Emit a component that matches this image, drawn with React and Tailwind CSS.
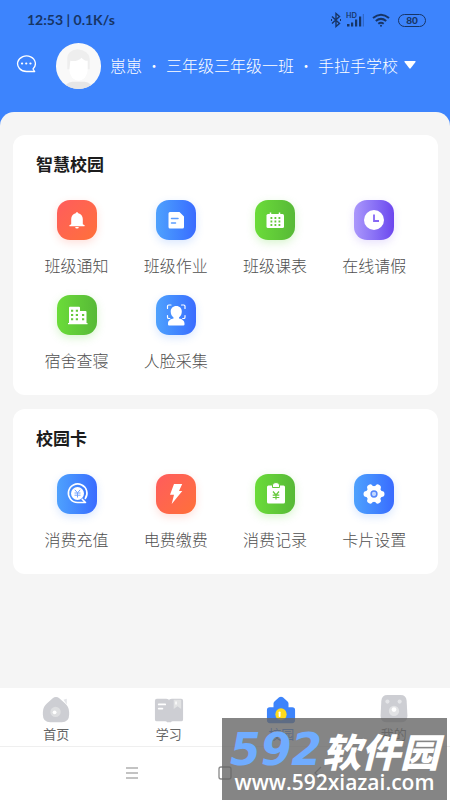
const GRADIENTS = {
  red: "bg-linear-to-br from-[#ff5c5c] to-[#ff7038] shadow-[0_3px_8px_#ff664d33]",
  blue: "bg-linear-to-r from-[#4fa1fd] to-[#3a6bff] shadow-[0_3px_8px_#4285ff33]",
  green: "bg-linear-to-r from-[#6bdc39] to-[#57b937] shadow-[0_3px_8px_#62d93b40]",
  purple: "bg-linear-to-r from-[#ab97fb] to-[#6d45ee] shadow-[0_3px_8px_#8b6bf533]",
};

const glyphs = {
  bell: (
    <g fill="#fff">
      <path d="M20 12.2c.7 0 1.200.5 1.300 1.100 2.700.6 4.500 2.800 4.500 5.600v5.300l1.700 1.100q.9.9-.4.9H12.900q-1.300 0-.4-.9l1.700-1.100v-5.300c0-2.800 1.800-5 4.500-5.600.1-.6.600-1.100 1.300-1.100z" />
      <path d="M18.200 27h3.600a1.800 1.600 0 0 1-3.600 0z" />
    </g>
  ),
  doc: (
    <>
      <path d="M14 12h9.500l4.500 4.500V27a1.500 1.500 0 0 1-1.500 1.500H14a1.500 1.500 0 0 1-1.500-1.500V13.500A1.500 1.500 0 0 1 14 12z" fill="#fff" />
      <path d="M15.500 18.500h6.500M15.500 23h4" stroke="#5b9dff" strokeWidth="1.5" strokeLinecap="round" />
    </>
  ),
  calendar: (
    <>
      <rect x="11.5" y="14" width="17.5" height="14" rx="1.5" fill="#fff" />
      <path d="M15.500 12.500V16M24.500 12.500V16" stroke="#fff" strokeWidth="1.5" />
      <path d="M15.500 18h10M15.500 21.500h10M15.500 25h10" stroke="#65c83a" strokeWidth="1.8" strokeDasharray="1.8 2.2" />
    </>
  ),
  clock: (
    <>
      <circle cx="20" cy="20" r="10" fill="#fff" />
      <path d="M20 14.500V21h5" fill="none" stroke="#8667f4" strokeWidth="1.8" />
    </>
  ),
  building: (
    <>
      <path d="M12 28V12.800q0-1 1-1h9q1 0 1 1V16h5.500q1 0 1 1v11h1v1.200H11V28z" fill="#fff" />
      <path d="M14 15.700h7M14 20h7M14 24.300h7M25 20h3M25 24.300h3" stroke="#65c83a" strokeWidth="2" strokeDasharray="2.2 2.6" />
    </>
  ),
  face: (
    <>
      <path d="M11.500 13.500v-2.200q0-1.300 1.300-1.300h2.200M25.500 10h2.200q1.300 0 1.300 1.300v2.200M11.500 20.500v1.700q0 1.300 1.300 1.300h1M29 20.500v1.700q0 1.300-1.300 1.300h-1" fill="none" stroke="#fff" strokeWidth="1.2" strokeLinecap="round" />
      <path d="M20.300 11c3.400 0 5.500 2.400 5.500 5.500 0 2.500-1 4.700-2.800 5.900v1c3 .6 5.500 2 5.500 5.200v1q0 1-1 1H13q-1 0-1-1v-1c0-3.200 2.500-4.600 5.500-5.200v-1c-1.800-1.200-2.800-3.400-2.800-5.900 0-3.100 2.200-5.500 5.600-5.500z" fill="#fff" />
    </>
  ),
  recharge: (
    <>
      <path d="M28.300 24.500A9.300 9.300 0 1 0 20.500 28.500h8l-3.300-3.300" fill="none" stroke="#fff" strokeWidth="1.6" strokeLinecap="round" strokeLinejoin="round" />
      <circle cx="20.500" cy="19.500" r="6.5" fill="#fff" />
      <path d="M17.800 15.800l2.700 3 2.700-3M17.500 19h6M17.500 21.200h6M20.500 19v4.500" fill="none" stroke="#6ea2ff" strokeWidth="1" />
    </>
  ),
  bolt: <path d="M18 10h8.200l-3.200 7h3.300L15.700 30l2.300-9.200h-4z" fill="#fff" />,
  bill: (
    <>
      <rect x="12" y="11.500" width="18" height="18" rx="1.5" fill="#fff" />
      <path d="M17.500 11a3.500 2.500 0 0 1 7 0v2.500h-7z" fill="#fff" stroke="#65c83a" strokeWidth="1" />
      <path d="M18 17.500l3 3.500 3-3.500M17.700 21.200h6.600M17.700 23.500h6.600M21 21v4.500" fill="none" stroke="#65c83a" strokeWidth="1.2" />
    </>
  ),
  gear: (
    <>
      <circle cx="20" cy="20" r="8" fill="#fff" />
      <path d="M12.500 20h15M16.200 13.500l7.600 13M23.800 13.500l-7.600 13" stroke="#fff" strokeWidth="6" strokeLinecap="round" />
      <circle cx="20" cy="20" r="2.9" fill="#c4d8ff" stroke="#5586fb" strokeWidth="1.5" />
    </>
  ),
};

const sections = [
  {
    title: "智慧校园",
    items: [
      ["班级通知", "red", "bell"],
      ["班级作业", "blue", "doc"],
      ["班级课表", "green", "calendar"],
      ["在线请假", "purple", "clock"],
      ["宿舍查寝", "green", "building"],
      ["人脸采集", "blue", "face"],
    ],
  },
  {
    title: "校园卡",
    items: [
      ["消费充值", "blue", "recharge"],
      ["电费缴费", "red", "bolt"],
      ["消费记录", "green", "bill"],
      ["卡片设置", "blue", "gear"],
    ],
  },
];

const tabs = [
  {
    label: "首页",
    icon: (
      <>
        <path d="M24 5l3.500-1v6z" fill="#e3e4e8" />
        <path d="M16 2q2 0 3.500 1.500l6 5.200Q30 12.500 30 18v3q0 8-8 8H10q-8 0-8-8v-3q0-5.500 4.500-9.300l6-5.200Q14 2 16 2z" fill="#cdced3" />
        <circle cx="15.500" cy="18" r="5.5" fill="#dedfe1" />
        <circle cx="14.500" cy="18.500" r="2" fill="#fff" />
      </>
    ),
  },
  {
    label: "学习",
    icon: (
      <>
        <path d="M3 4h10q3 0 3 2 0-2 3-2h10q2 0 2 2v20q0 2-2 2h-9q-1.500 0-2 1h-4q-.5-1-2-1H3q-2 0-2-2V6q0-2 2-2z" fill="#cdced3" />
        <path d="M5 10h7M5 14.500h4" stroke="#fff" strokeWidth="1.8" strokeLinecap="round" />
        <path d="M21 5h8v10l-4-3-4 3z" fill="#e2e3e4" />
        <path d="M23.500 7v3" stroke="#fff" strokeWidth="1.5" />
      </>
    ),
  },
  {
    label: "校园",
    active: true,
    icon: (
      <>
        <path d="M8 13V9q0-1 1-2l5-4.500q2-1.500 4 0L23 7q1 1 1 2v4h4q3 0 3 3v11q0 3-3 3H4q-3 0-3-3V16q0-3 3-3z" fill="#3d84fb" />
        <ellipse cx="16" cy="20.500" rx="6" ry="6.5" fill="#ffdb1c" />
        <path d="M14.500 18.500v4" stroke="#fff" strokeWidth="2" strokeLinecap="round" />
      </>
    ),
  },
  {
    label: "我的",
    icon: (
      <>
        <path d="M9 0h14q6 0 6.500 6l.8 16q0 7-7 7H8.700q-7 0-7-7l.8-16Q3 0 9 0z" fill="#cdced3" />
        <circle cx="9" cy="7" r="2.2" fill="#e4e5e8" />
        <circle cx="22" cy="7" r="2.2" fill="#e4e5e8" />
        <circle cx="16" cy="17" r="5.5" fill="#e2e3e5" />
        <circle cx="16" cy="15.500" r="2.5" fill="#fff" />
      </>
    ),
  },
];

function StatusBar() {
  return (
    <div className="flex h-10 items-center justify-between pr-6 pl-[27px] font-['Lato',sans-serif] text-[#173566]">
      <span className="text-sm font-bold">12:53 | 0.1K/s</span>
      <div className="flex items-center gap-1">
        <svg className="h-4 w-3" viewBox="0 0 12 16" fill="none" stroke="currentColor" strokeWidth="1.4">
          <path d="M2 4.500l7.500 7L6 14.500v-13l3.500 3L2 11.500" />
          <path d="M1 8h1M10 8h1" strokeWidth="2" />
        </svg>
        <svg className="h-4 w-[18px]" viewBox="0 0 18 16" fill="currentColor">
          <text x="0" y="6" fontSize="7" fontWeight="700">HD</text>
          <path d="M1 12h2.500v2.500H1zM5 10.500h2.200v4H5zM9 7.500h2.200v7H9zM13 4.500h2.200v10H13z" />
          <path d="M16.800 2H18v12.500h-1.200z" opacity=".35" />
        </svg>
        <svg className="mx-1 h-4 w-[18px]" viewBox="0 0 18 16" fill="none" stroke="currentColor" strokeWidth="2">
          <path d="M1 6q8-6.500 16 0M3.800 9q5.200-4.200 10.400 0M6.300 11.800q2.700-2 5.400 0" />
          <circle cx="9" cy="13.800" r="1" fill="currentColor" stroke="none" />
        </svg>
        <span className="flex h-[13px] w-7 items-center justify-center rounded-full border border-current text-[10px] leading-3 font-black">80</span>
      </div>
    </div>
  );
}

function Header() {
  return (
    <header className="flex h-[72px] items-start pl-4 text-white">
      <button aria-label="消息" className="mt-[14px] shrink-0">
        <svg className="h-5 w-5" viewBox="0 0 20 20" fill="none" stroke="currentColor" strokeWidth="1.3" strokeLinecap="round" strokeLinejoin="round">
          <path d="M17 15A8.900 7.800 0 1 0 10.500 17.500h8.200z" />
          <path d="M6 9.500h.1M10.200 9.500h.1M14.400 9.500h.1" strokeWidth="2.2" />
        </svg>
      </button>
      <svg className="mt-[3px] ml-5 h-[46px] w-[45px] shrink-0 rounded-full" viewBox="0 0 44 44" preserveAspectRatio="none">
        <rect width="44" height="44" fill="#f9f9f9" />
        <path d="M8 44q1-6 8-7h12q7 1 8 7z" fill="#e6e6e6" />
        <path d="M11 25V15q0-8 10-9 11 1 12 9v10z" fill="#eeeeee" />
        <path d="M14 17q7 1 11-3 2 3 6 3v9q-1 9-9 10-8-1-9-10z" fill="#fff" />
      </svg>
      <button className="mt-3 ml-[9px] flex h-[26px] items-center text-base font-light whitespace-nowrap">
        <span>崽崽</span>
        <span className="w-6 text-center font-thin">·</span>
        <span>三年级三年级一班</span>
        <span className="w-6 text-center font-thin">·</span>
        <span>手拉手学校</span>
        <svg className="ml-[6px] h-2 w-3" viewBox="0 0 12 8" fill="currentColor">
          <path d="M1 0h10q1 0 .5 1L6.700 7.300q-.7.700-1.400 0L.5 1Q0 0 1 0z" />
        </svg>
      </button>
    </header>
  );
}

function Section({ title, items }) {
  return (
    <section className="rounded-xl bg-white px-[14px] pt-[17px] pb-[23px]">
      <h2 className="pl-[9px] text-[17px] leading-6 font-bold text-[#1c1c1c]">{title}</h2>
      <div className="mt-6 grid grid-cols-4 gap-y-[18px]">
        {items.map(([label, color, glyph]) => (
          <button key={label} className="flex flex-col items-center gap-[13px]">
            <span className={`h-10 w-10 rounded-[13px] ${GRADIENTS[color]}`}>
              <svg className="h-10 w-10" viewBox="0 0 40 40" fill="none">{glyphs[glyph]}</svg>
            </span>
            <span className="text-base leading-6 font-light whitespace-nowrap text-[#505050]">{label}</span>
          </button>
        ))}
      </div>
    </section>
  );
}

function Watermark() {
  return (
    <div className="absolute right-[3px] bottom-0 flex h-[82px] w-[225px] flex-col items-center overflow-hidden bg-[#666]/80 whitespace-nowrap">
      <div className="mt-3 flex h-10 items-center italic">
        <span className="font-['DejaVu_Sans'] text-[44px] leading-10 font-bold text-[#70acff]">592</span>
        <span className="text-[39px] leading-10 font-black text-white">软件园</span>
      </div>
      <span className="font-['Open_Sans'] text-[21px] leading-6 font-semibold text-white">www.592xiazai.com</span>
    </div>
  );
}

export default function App() {
  return (
    <div className="relative flex min-h-screen flex-col bg-[#3d84fd] font-['Noto_Sans_CJK_SC',sans-serif]">
      <StatusBar />
      <Header />
      <main className="flex grow flex-col gap-[14px] rounded-t-[14px] bg-[#f5f5f5] pt-[23px] pr-3 pb-6 pl-[13px]">
        {sections.map((s) => (
          <Section key={s.title} {...s} />
        ))}
      </main>
      <nav className="grid h-[58px] grid-cols-4 bg-white">
        {tabs.map((t) => (
          <button key={t.label} className="flex flex-col items-center pt-[7px]">
            <svg className="h-[30px] w-[30px]" viewBox="0 0 32 32">{t.icon}</svg>
            <span className={`text-[13px] leading-[18px] ${t.active ? "text-[#3d84fb]" : "text-[#666]"}`}>{t.label}</span>
          </button>
        ))}
      </nav>
      <div className="flex h-[54px] items-center justify-center gap-[73px] border-t border-[#efefef] bg-white text-[#888]">
        <button aria-label="菜单">
          <svg className="h-5 w-5" viewBox="0 0 20 20" stroke="currentColor" strokeWidth="1.2">
            <path d="M4 4h12M4 9h12M4 14h12" />
          </svg>
        </button>
        <button aria-label="主屏幕">
          <svg className="h-5 w-5" viewBox="0 0 20 20" fill="none" stroke="currentColor" strokeWidth="1.3">
            <rect x="4" y="3" width="12" height="12" rx="2" />
          </svg>
        </button>
        <button aria-label="返回">
          <svg className="h-5 w-5" viewBox="0 0 20 20" fill="none" stroke="currentColor" strokeWidth="1.3">
            <path d="M13 3l-6 6 6 6" />
          </svg>
        </button>
      </div>
      <Watermark />
    </div>
  );
}
